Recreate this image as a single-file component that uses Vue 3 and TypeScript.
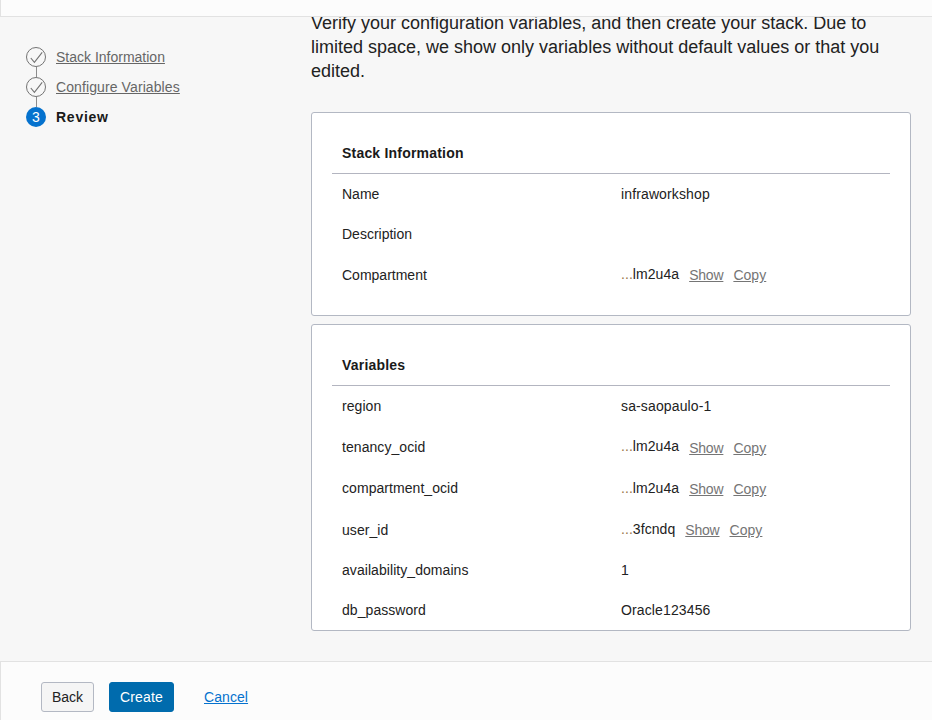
<script setup lang="ts">
interface Field {
  label: string
  value: string
  masked?: boolean
}

interface Section {
  title: string
  kind: string
  fields: Field[]
}

const steps: string[] = ['Stack Information', 'Configure Variables']

const sections: Section[] = [
  {
    title: 'Stack Information',
    kind: 'info',
    fields: [
      { label: 'Name', value: 'infraworkshop' },
      { label: 'Description', value: '' },
      { label: 'Compartment', value: 'lm2u4a', masked: true },
    ],
  },
  {
    title: 'Variables',
    kind: 'variables',
    fields: [
      { label: 'region', value: 'sa-saopaulo-1' },
      { label: 'tenancy_ocid', value: 'lm2u4a', masked: true },
      { label: 'compartment_ocid', value: 'lm2u4a', masked: true },
      { label: 'user_id', value: '3fcndq', masked: true },
      { label: 'availability_domains', value: '1' },
      { label: 'db_password', value: 'Oracle123456' },
    ],
  },
]
</script>

<template>
  <div class="wizard">
    <header class="topbar"></header>
    <div class="body">
      <nav class="steps">
        <div v-for="step in steps" :key="step" class="step done">
          <svg class="marker" width="20" height="30" viewBox="0 0 20 30" fill="none">
            <circle cx="10" cy="10" r="9.5" stroke="#737373" />
            <path d="M4.8 11 8.4 15.4 16.2 5.4" stroke="#737373" stroke-width="1.1" />
            <path d="M10.5 20V30" stroke="#8c8c8c" />
          </svg>
          <a class="step-link">{{ step }}</a>
        </div>
        <div class="step current">
          <span class="number">3</span>
          <span class="step-name">Review</span>
        </div>
      </nav>
      <main class="content">
        <p class="intro">
          Verify your configuration variables, and then create your stack. Due to<br />
          limited space, we show only variables without default values or that you<br />
          edited.
        </p>
        <section v-for="section in sections" :key="section.title" class="card" :class="section.kind">
          <h2 class="title">{{ section.title }}</h2>
          <div v-for="field in section.fields" :key="field.label" class="row" :class="{ masked: field.masked }">
            <span class="label">{{ field.label }}</span>
            <span class="value"><span v-if="field.masked" class="dots">...</span>{{ field.value }}</span>
            <template v-if="field.masked">
              <a class="action">Show</a>
              <a class="action">Copy</a>
            </template>
          </div>
        </section>
      </main>
    </div>
    <footer class="footer">
      <button class="btn">Back</button>
      <button class="btn primary">Create</button>
      <a class="cancel">Cancel</a>
    </footer>
  </div>
</template>

<style>
body {
  margin: 0;
  overflow: hidden;
}
</style>

<style scoped>
.wizard {
  display: flex;
  flex-direction: column;
  width: 932px;
  height: 720px;
  box-sizing: border-box;
  background: #f7f7f7;
  color: #222;
  font: 14px/20px "Liberation Sans", Arial, sans-serif;
  overflow: hidden;
}
.topbar {
  flex: none;
  height: 16px;
  border-left: 1px solid #e2e2e2;
  border-bottom: 1px solid #e2e2e2;
  background: #fcfcfc;
}
.body {
  flex: 1;
  min-height: 0;
  display: flex;
  overflow: hidden;
}
.steps {
  width: 285px;
  padding: 30px 0 0 26px;
  box-sizing: content-box;
  flex: none;
}
.step {
  display: flex;
  gap: 10px;
  height: 30px;
}
.marker {
  display: block;
  flex: none;
}
.step-link {
  color: #666;
  text-decoration: underline;
  height: 20px;
}
.step:nth-child(2) .step-link {
  letter-spacing: 0.1px;
}
.number {
  width: 20px;
  height: 20px;
  border-radius: 50%;
  background: #0572ce;
  color: #fff;
  text-align: center;
}
.step-name {
  font-weight: bold;
  letter-spacing: 0.75px;
  color: #1a1a1a;
}
.content {
  width: 600px;
}
.intro {
  margin: -6px 0 29px;
  font-size: 18px;
  line-height: 24px;
  white-space: nowrap;
}
.card {
  box-sizing: border-box;
  padding: 0 20px;
  border: 1px solid #b3b8c3;
  border-radius: 3px;
  background: #fff;
}
.info {
  height: 204px;
  margin-bottom: 8px;
}
.variables {
  height: 307px;
}
.title {
  margin: 0;
  padding: 30px 10px 10px;
  border-bottom: 1px solid #b3b5c0;
  font-size: 14px;
  line-height: 20px;
  letter-spacing: 0.2px;
  color: #1a1a1a;
}
.row {
  display: flex;
  align-items: center;
  height: 40px;
  padding-left: 10px;
}
.row.masked {
  height: 41.33px;
}
.label {
  width: 279px;
}
.variables .label {
  letter-spacing: 0.06px;
}
.masked .label {
  margin-top: 0.4px;
}
.value {
  letter-spacing: 0.13px;
}
.masked .value {
  margin-bottom: 0.8px;
  letter-spacing: 0.06px;
}
.dots {
  color: #9a7448;
}
.action {
  margin: 2px 0 0 10px;
  color: #757575;
  letter-spacing: -0.2px;
  text-decoration: underline;
}
.action + .action {
  letter-spacing: 0.05px;
}
.info .action {
  margin-top: 1px;
}
.footer {
  flex: none;
  display: flex;
  align-items: flex-start;
  height: 59px;
  box-sizing: border-box;
  padding: 20px 0 0 40px;
  border-top: 1px solid #e2e2e2;
  border-left: 1px solid #e2e2e2;
  background: #fcfcfc;
}
.btn {
  box-sizing: border-box;
  width: 53px;
  height: 30px;
  margin: 0 15px 0 0;
  padding: 0;
  border: 1px solid #b3b8c3;
  border-radius: 3px;
  background: #f5f5f5;
  color: #222;
  font: inherit;
}
.btn.primary {
  width: 65px;
  margin-right: 30px;
  border-color: #006bad;
  background: #006bad;
  color: #fff;
  letter-spacing: 0.15px;
}
.cancel {
  color: #0572ce;
  line-height: 30px;
  letter-spacing: 0.08px;
  text-decoration: underline;
}
</style>
